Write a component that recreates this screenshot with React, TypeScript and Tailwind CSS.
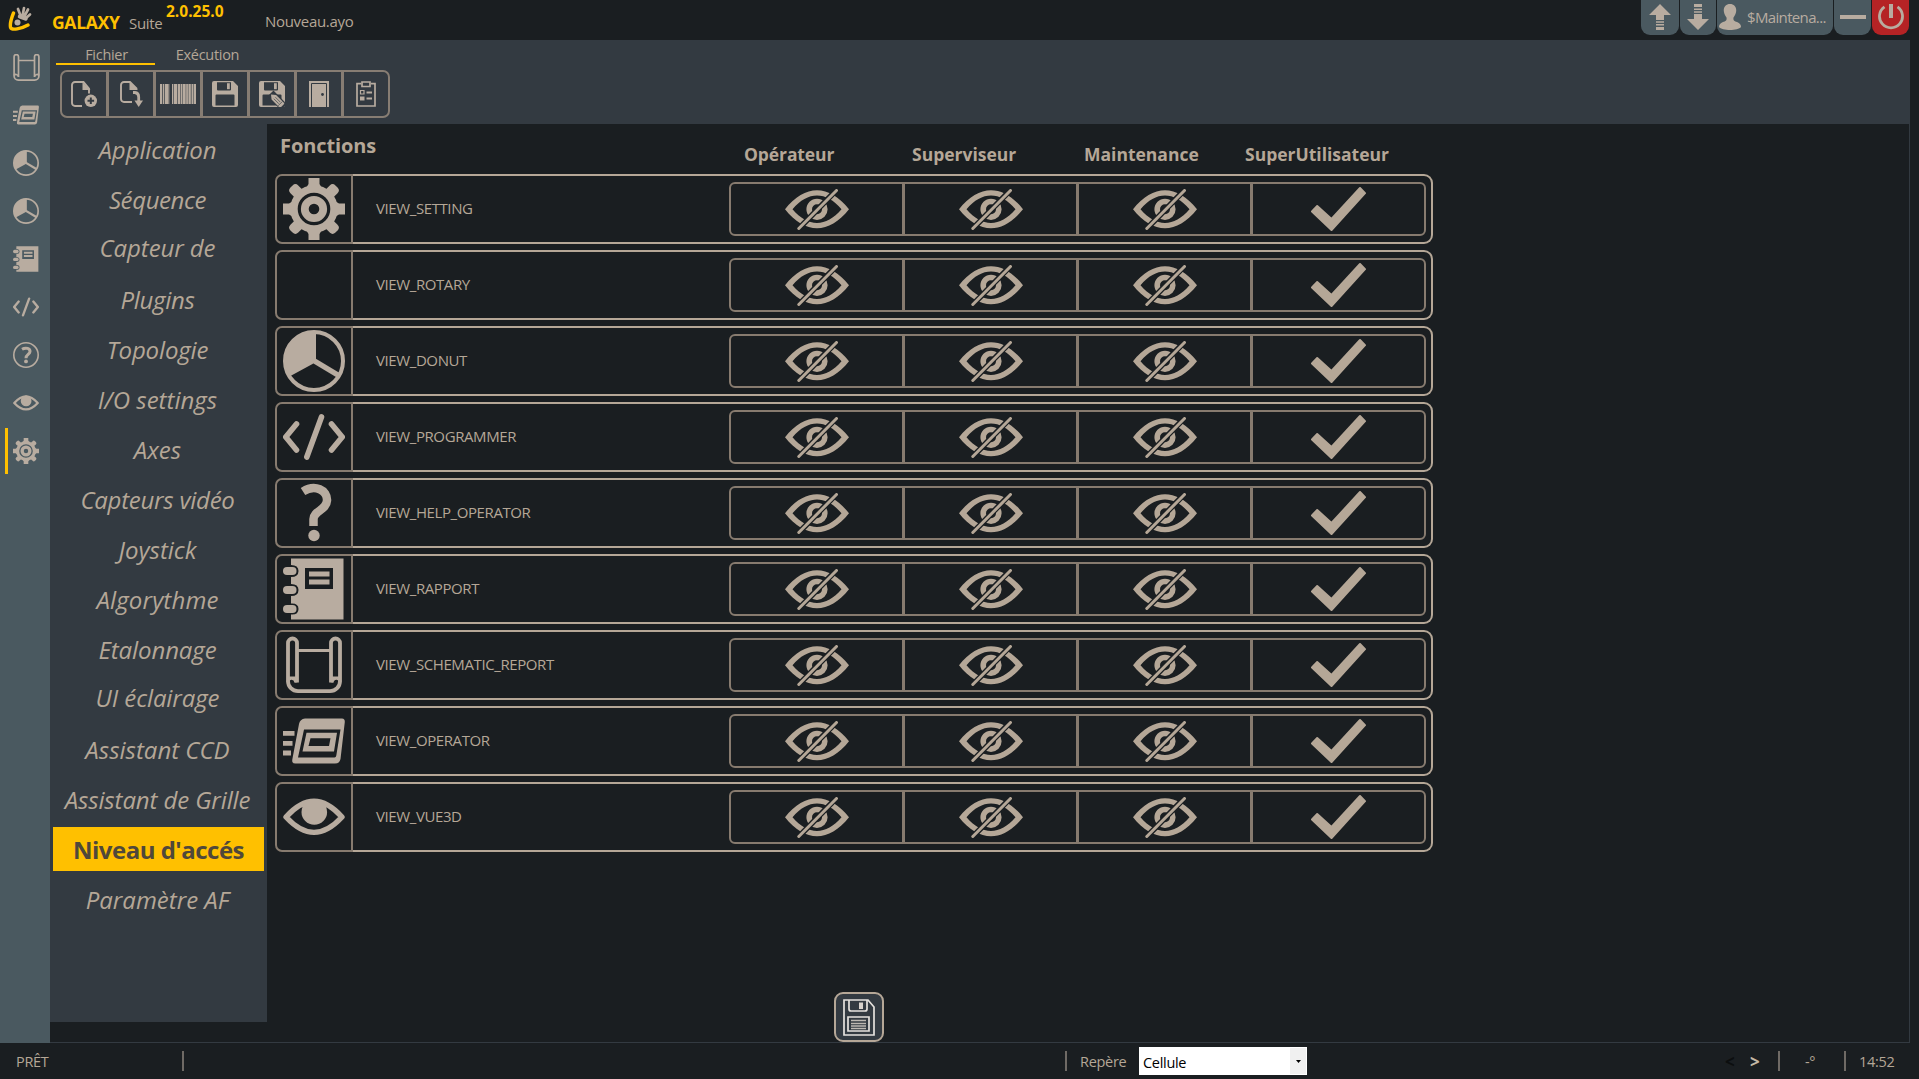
import React from "react";

type IconProps = { className?: string };

const GearIcon = ({ className }: IconProps) => (
  <svg viewBox="0 0 62 62" className={className} fill="currentColor">
    <circle cx="31" cy="31" r="20" fill="none" stroke="currentColor" strokeWidth="7.4" />
    <circle cx="31" cy="31" r="9.2" fill="none" stroke="currentColor" strokeWidth="7.8" />
    {[0, 90, 180, 270].map((a) => (
      <path key={a} d="M25.5 0h11v6l3 5H22.500l3-5z" transform={`rotate(${a} 31 31)`} />
    ))}
    {[45, 135, 225, 315].map((a) => (
      <rect key={a} x="25.5" y="-0.8" width="11" height="13" rx="4" transform={`rotate(${a} 31 31)`} />
    ))}
  </svg>
);

const DonutIcon = ({ className }: IconProps) => (
  <svg viewBox="0 0 62 62" className={className}>
    <circle cx="31" cy="31" r="29" fill="none" stroke="currentColor" strokeWidth="4" />
    <path d="M33 1A30 30 0 0 0 6.5 46.5L29.5 34L33 31z" fill="currentColor" />
    <path d="M29 29.5L56.5 46" stroke="currentColor" strokeWidth="5.5" />
  </svg>
);

const CodeIcon = ({ className }: IconProps) => (
  <svg viewBox="0 0 62 62" className={className} fill="none" stroke="currentColor" strokeWidth="5.6" strokeLinecap="round">
    <path d="M13.5 18L2.8 31L13.5 44M48.5 18L59.2 31L48.5 44M38.5 11L23.8 51" />
  </svg>
);

const QuestionIcon = ({ className }: IconProps) => (
  <svg viewBox="0 0 62 62" className={className}>
    <path d="M20 9.5C32 2 44.500 8 44 18.500C43.500 28 30.500 29 30.500 37V44" fill="none" stroke="currentColor" strokeWidth="8.500" />
    <circle cx="31" cy="53.500" r="5.700" fill="currentColor" />
  </svg>
);

const HelpCircleIcon = ({ className }: IconProps) => (
  <svg viewBox="0 0 26 26" className={className}>
    <circle cx="13" cy="13" r="12.200" fill="none" stroke="currentColor" strokeWidth="1.600" />
    <path d="M9 7.300C13 5 17.300 6.500 17 9.700C16.700 12.500 13 12.600 13 16.200" fill="none" stroke="currentColor" strokeWidth="3" />
    <circle cx="13" cy="19.400" r="1.900" fill="currentColor" />
  </svg>
);

const NotebookIcon = ({ className }: IconProps) => (
  <svg viewBox="0 0 62 62" className={className} fill="currentColor">
    <path
      fillRule="evenodd"
      d="M8 0.5H60.500V61.500H8V56.500Q15.500 57 15.500 51T8 45.500V38Q15.500 38 15.500 32T8 26V19Q15.500 19 15.500 13T8 7zM22 10V31H50V10z"
    />
    <path d="M26 13.500H46.500V18.500H26zM26 21.500H46.500V26.500H26z" />
    {[13, 32, 51].map((y) => (
      <rect key={y} x="0" y={y - 4} width="13.500" height="8" rx="4" />
    ))}
  </svg>
);

const ScrollIcon = ({ className }: IconProps) => (
  <svg viewBox="0 0 62 62" className={className} fill="none" stroke="currentColor" strokeWidth="3.800">
    <path d="M14 48.500V9a4.500 4.500 0 0 0-9 0V47a10 10 0 0 0 10 10.200H47a10 10 0 0 0 10-10.200V9a4.500 4.500 0 0 0-9 0V48.500" />
    <path d="M14 16.500H48M5 44H14M5 48C5 43 12 43 13 48.500M57 44H48M57 48C57 43 50 43 49 48.500" strokeWidth="3" />
  </svg>
);

const SmallScrollIcon = ({ className }: IconProps) => (
  <svg viewBox="0 0 27 27" className={className} fill="none" stroke="currentColor" strokeWidth="1.700">
    <path d="M5.500 23V2.800a2.200 2.200 0 0 0-4.400 0V22a4.200 4.200 0 0 0 4.200 4.100H21.700a4.200 4.200 0 0 0 4.200-4.100V2.800a2.200 2.200 0 0 0-4.400 0V23" />
    <path d="M5.500 6.500H21.500M1.100 21.500C2 20 4.500 20 5.500 22.500M25.900 21.500C25 20 22.500 20 21.500 22.500" />
  </svg>
);

const OperatorIcon = ({ className }: IconProps) => (
  <svg viewBox="0 0 62 62" className={className} fill="currentColor">
    <path
      fillRule="evenodd"
      d="M22 8.500H59Q62 8.500 61.800 12L57.500 49Q56.500 53.500 52 53.500H12.500Q8.500 53.500 9.300 49.500L16 14Q17 9 22 8.500zM21 19.500L15 47.500H51.500Q53 47.500 53.300 45.500L57.500 19.500z"
    />
    <path fillRule="evenodd" d="M23.500 22.700H54L51 41.500H19.500zM27.500 28.300L25.500 36H46L47.500 28.300z" />
    <path d="M0 21H11.500V25.800H0zM0 31H9.500V35.800H0zM0 40.500H8V45.500H0z" />
  </svg>
);

const EyeIcon = ({ className }: IconProps) => (
  <svg viewBox="0 0 62 62" className={className}>
    <path d="M3 31C22 10 40 10 59 31C40 51.500 22 51.500 3 31z" fill="none" stroke="currentColor" strokeWidth="5.400" strokeLinejoin="round" />
    <circle cx="31.300" cy="26" r="12.800" fill="currentColor" />
  </svg>
);

const HiddenIcon = () => (
  <svg viewBox="0 0 64 41" className="h-[41px] w-[64px] text-[#b5a797]">
    <path
      fill="currentColor"
      fillRule="evenodd"
      d="M0 20.300C20 -5 44 -5 64 20.300C44 45.600 20 45.600 0 20.300zM7.500 20.300C23 38.500 41 38.500 56.500 20.300C41 2 23 2 7.500 20.300z"
    />
    <circle cx="32" cy="20.300" r="7.800" fill="none" stroke="currentColor" strokeWidth="5.600" />
    <path d="M54 -1.500L11 42.500" stroke="#1a1e21" strokeWidth="5.600" />
    <path d="M51.500 1.500L13.800 39.500" stroke="currentColor" strokeWidth="3" strokeLinecap="round" />
  </svg>
);

const TickIcon = () => (
  <svg viewBox="0 0 55 44" className="h-[44px] w-[55px] text-[#b5a797]">
    <path d="M1 24.500L6.200 19L20.500 32L49 1L54 6.200L20.500 43z" fill="currentColor" stroke="currentColor" strokeWidth="2" strokeLinejoin="round" />
  </svg>
);

const LogoIcon = () => (
  <svg viewBox="0 0 24 25" className="h-[25px] w-[24px]" fill="none" strokeLinecap="round">
    <g stroke="#b8aca0" strokeWidth="2.700">
      <path d="M12.500 9.500L10 3M14.700 9L16 2M16.500 10L20 3.500M18 12L22 8.500" />
      <path d="M12 10.500L17.500 12.500" strokeWidth="4.500" />
    </g>
    <circle cx="9.500" cy="16.500" r="3" fill="#b8aca0" />
    <path d="M5.500 7C3.500 12 1.800 18.500 2.600 21.500C3.800 24.500 13 23 20 19" stroke="#ffc000" strokeWidth="3.400" />
  </svg>
);

const NewFileIcon = () => (
  <svg viewBox="0 0 26 26" className="h-[26px] w-[26px]">
    <path d="M11 25H4a3 3 0 0 1-3-3V4a3 3 0 0 1 3-3H12.500L18 7.500V12.500" fill="none" stroke="currentColor" strokeWidth="1.900" />
    <path d="M11.500 1V9H19.500z" fill="currentColor" />
    <circle cx="19.800" cy="19.800" r="6.200" fill="currentColor" />
    <path d="M19.800 16.500v6.600M16.500 19.800h6.600" stroke="#333a41" strokeWidth="2" />
  </svg>
);

const ImportFileIcon = () => (
  <svg viewBox="0 0 23 26" className="h-[26px] w-[23px]">
    <path d="M12 21H4a3 3 0 0 1-3-3V4a3 3 0 0 1 3-3H10L17 8" fill="none" stroke="currentColor" strokeWidth="1.900" />
    <path d="M9.500 1V9H18z" fill="currentColor" />
    <path d="M13 11.500H15Q18.700 12 18.700 16V20" fill="none" stroke="currentColor" strokeWidth="2.800" />
    <path d="M14.500 19.500H23L18.700 26z" fill="currentColor" />
  </svg>
);

const BarcodeIcon = () => (
  <svg viewBox="0 0 36 20" className="h-[20px] w-[36px]" fill="currentColor">
    {[
      [0, 2.2], [2.9, 1.4], [5, 3], [8.300, 1], [12, 1.2], [13.800, 3.400], [17.800, 2.400], [20.700, 1.300], [22.500, 3.200], [26.200, 1.700], [28.400, 2.400], [31.500, 1.500], [33.500, 2.500],
    ].map(([x, w]) => (
      <rect key={x} x={x} width={w} height="20" />
    ))}
  </svg>
);

const FloppyIcon = ({ edit = false }: { edit?: boolean }) => (
  <svg viewBox="0 0 26 26" className="h-[26px] w-[26px]">
    <path
      fill="currentColor"
      fillRule="evenodd"
      d="M2 0H21L26 5V24a2 2 0 0 1-2 2H2a2 2 0 0 1-2-2V2a2 2 0 0 1 2-2zM5 1.300V8.500a1 1 0 0 0 1 1H18a1 1 0 0 0 1-1V1.300zM3.500 14.500V24.500H22.500V14.500a1 1 0 0 0-1-1H4.500a1 1 0 0 0-1 1z"
    />
    <path d="M15 2.200h2.800v6H15z" fill="currentColor" />
    {edit && (
      <g transform="translate(12 13.500) rotate(-45)">
        <path d="M-4 -1H4.500V18H-4z" fill="#333a41" />
        <path d="M0 0L3.200 4V15a1 1 0 0 1-1 1H-2.200a1 1 0 0 1-1-1V4z" fill="currentColor" />
        <path d="M-1 5V12M1.200 5V12M-3 13H3" stroke="#333a41" strokeWidth="0.600" />
      </g>
    )}
  </svg>
);

const DoorIcon = () => (
  <svg viewBox="0 0 20 26" className="h-[26px] w-[20px]">
    <path d="M0 0H20V26H0z" fill="currentColor" />
    <path d="M2.500 26V2.500H17.500V26" fill="none" stroke="#333a41" strokeWidth="1" />
    <circle cx="13.500" cy="13.500" r="1.400" fill="#333a41" />
  </svg>
);

const ClipboardIcon = () => (
  <svg viewBox="0 0 20 26" className="h-[26px] w-[20px]" fill="none" stroke="currentColor" strokeWidth="1.700">
    <path d="M5 2.700H1V25H19V2.700H15M6 1H14V5.500H6z" />
    <path d="M4.500 9.500H8V13H4.500z" strokeWidth="1.200" />
    <path d="M10.500 11.500H16M10.500 17.500H16" strokeWidth="1.900" />
    <path d="M4 15.500H8.500V19.500H4z" fill="currentColor" stroke="none" />
  </svg>
);

const SaveIcon = () => (
  <svg viewBox="0 0 32 37" className="h-[37px] w-[32px]" fill="none" stroke="#e6e2de" strokeWidth="1.700">
    <path d="M1 1H25L31 8V36H1z" />
    <path d="M6 1V10a2 2 0 0 0 2 2H22a2 2 0 0 0 2-2V1" />
    <path d="M5 18H26V32H5z" />
    <path d="M16 3.500H20V10H16z" fill="#d8d2cc" stroke="none" />
    <path d="M8 21.500H23M8 24.500H23M8 27H23M8 29.500H23" stroke="#bdb8b2" strokeWidth="1.500" />
  </svg>
);

const UploadArrow = ({ className }: IconProps) => (
  <svg viewBox="0 0 22 26" className={className} fill="currentColor">
    <path d="M11 0L22 11H15V16H7V11H0z" />
    <path d="M7 17.300H15V18.800H7zM7 20H15V21.500H7zM7 23H15V26H7z" />
  </svg>
);

const UserIcon = () => (
  <svg viewBox="0 0 22 26" className="h-[26px] w-[22px]" fill="currentColor">
    <path d="M11 0C15 0 17.500 3 17.200 7C17 10 15.500 12 14.500 13.500C14 16.500 15 17 18 18C21 19 22 21 22 23C19 27 3 27 0 23C0 21 1 19 4 18C7 17 8 16.500 7.500 13.500C6.500 12 5 10 4.800 7C4.500 3 7 0 11 0z" />
  </svg>
);

const PowerIcon = () => (
  <svg viewBox="0 0 26 26" className="h-[26px] w-[26px]" fill="none" stroke="currentColor">
    <path d="M6.500 2.800A11.500 11.500 0 1 0 19.500 2.800" strokeWidth="2.800" />
    <path d="M13 0V14" strokeWidth="4" />
  </svg>
);

const sideIcons = [
  SmallScrollIcon, OperatorIcon, DonutIcon, DonutIcon, NotebookIcon, CodeIcon, HelpCircleIcon, EyeIcon, GearIcon,
];

const menu: { label: string; className: string }[] = [
  { label: "Application", className: "tracking-[-0.1px]" },
  { label: "Séquence", className: "tracking-[-0.4px]" },
  { label: "Capteur de", className: "pb-[4px] tracking-[-0.1px]" },
  { label: "Plugins", className: "tracking-[-0.3px]" },
  { label: "Topologie", className: "tracking-[-0.15px]" },
  { label: "I/O settings", className: "" },
  { label: "Axes", className: "" },
  { label: "Capteurs vidéo", className: "tracking-[-0.25px]" },
  { label: "Joystick", className: "" },
  { label: "Algorythme", className: "tracking-[0.15px]" },
  { label: "Etalonnage", className: "tracking-[-0.1px]" },
  { label: "UI éclairage", className: "pb-[4px] tracking-[-0.1px]" },
  { label: "Assistant CCD", className: "" },
  { label: "Assistant de Grille", className: "tracking-[-0.12px]" },
  { label: "Niveau d'accés", className: "" },
  { label: "Paramètre AF", className: "" },
];

const rows: { label: string; Icon?: React.FC<IconProps> }[] = [
  { label: "VIEW_SETTING", Icon: GearIcon },
  { label: "VIEW_ROTARY" },
  { label: "VIEW_DONUT", Icon: DonutIcon },
  { label: "VIEW_PROGRAMMER", Icon: CodeIcon },
  { label: "VIEW_HELP_OPERATOR", Icon: QuestionIcon },
  { label: "VIEW_RAPPORT", Icon: NotebookIcon },
  { label: "VIEW_SCHEMATIC_REPORT", Icon: ScrollIcon },
  { label: "VIEW_OPERATOR", Icon: OperatorIcon },
  { label: "VIEW_VUE3D", Icon: EyeIcon },
];

const tools = [
  <NewFileIcon />, <ImportFileIcon />, <BarcodeIcon />, <FloppyIcon />, <FloppyIcon edit />, <DoorIcon />, <ClipboardIcon />,
];

function Header() {
  return (
    <header className="flex h-[40px] shrink-0 justify-between pr-[10px]">
      <div className="flex whitespace-nowrap">
        <div className="w-[52px] pl-[8px] pt-[6px]"><LogoIcon /></div>
        <div className="w-[77px] pt-[10px] text-[17.5px] font-bold leading-[24px] tracking-[-0.3px] text-[#ffc000]">GALAXY</div>
        <div className="w-[37px] pt-[11px] text-[15px] leading-[24px] tracking-[-0.3px]">Suite</div>
        <div className="w-[99px] pt-px text-[15.5px] font-bold leading-[21px] text-[#ffc000]">2.0.25.0</div>
        <div className="pt-[10px] text-[15px] leading-[23px] tracking-[-0.3px]">Nouveau.ayo</div>
      </div>
      <div className="flex h-[35px] gap-px text-[#b8aca0]">
        <div className="flex w-[38px] justify-center rounded-b-[9px] bg-[#4a5960] pt-[4px]"><UploadArrow className="h-[26px] w-[22px]" /></div>
        <div className="flex w-[36px] justify-center rounded-b-[9px] bg-[#4a5960] pt-[4px]"><UploadArrow className="h-[26px] w-[22px] rotate-180" /></div>
        <div className="flex w-[116px] rounded-b-[9px] bg-[#4a5960] pl-[2px] pt-[4px]">
          <UserIcon />
          <span className="pl-[6px] text-[15px] leading-[27px] tracking-[-0.65px]">$Maintena...</span>
        </div>
        <div className="flex w-[37px] justify-center rounded-b-[9px] bg-[#4a5960] pt-[15px]"><div className="h-[4px] w-[26px] bg-[#b8aca0]" /></div>
        <div className="flex w-[37px] justify-center rounded-b-[9px] bg-[#b52325] pt-[4px]"><PowerIcon /></div>
      </div>
    </header>
  );
}

function Toolbar() {
  return (
    <div className="h-[84px] shrink-0 bg-[#333a41]">
      <div className="flex h-[30px] items-start pl-[6px] text-center text-[14.5px] leading-[22px] tracking-[-0.3px]">
        <div className="h-[25px] w-[99px] border-b-2 border-[#ffc000] pl-[2px] pt-[4px]">Fichier</div>
        <div className="w-[105px] pt-[4px]">Exécution</div>
      </div>
      <div className="ml-[10px] flex h-[48px] w-[330px] divide-x-[3px] divide-[#877d73] rounded-[7px] border-2 border-[#877d73] text-[#b8aca0]">
        {tools.map((icon, i) => (
          <div key={i} className="flex flex-1 items-center justify-center">{icon}</div>
        ))}
      </div>
    </div>
  );
}

function AccessTable() {
  return (
    <section className="flex flex-1 flex-col pl-[8px]">
      <div className="flex h-[50px] whitespace-nowrap font-bold">
        <h2 className="w-[463px] pl-[5px] pt-[8px] text-[20px] leading-[28px] tracking-[-0.1px]">Fonctions</h2>
        <div className="flex pt-[18px] text-[17.5px] leading-[24px]">
          <span className="w-[168px] pl-[6px] tracking-[-0.1px]">Opérateur</span>
          <span className="w-[172px] pl-[6px]">Superviseur</span>
          <span className="w-[161px] pl-[6px]">Maintenance</span>
          <span className="pl-[6px]">SuperUtilisateur</span>
        </div>
      </div>
      <div className="flex flex-col gap-[6px]">
        {rows.map(({ label, Icon }) => (
          <div key={label} className="flex h-[70px] w-[1158px]">
            <div className="flex w-[78px] items-center justify-center rounded-l-[7px] border-2 border-[#877b6f] text-[#b8aca0]">
              {Icon && <Icon className="h-[62px] w-[62px]" />}
            </div>
            <div className="flex flex-1 items-center rounded-r-[9px] border-y-2 border-r-2 border-[#b5a797] pl-[23px] pr-[5px]">
              <span className="w-[353px] pb-[2px] text-[15px] tracking-[-0.4px]">{label}</span>
              <div className="flex h-[54px] w-[697px] shrink-0 divide-x-[3px] divide-[#877b6f] rounded-[6px] border-2 border-[#877b6f]">
                <div className="flex w-[174px] items-center justify-center"><HiddenIcon /></div>
                <div className="flex w-[174px] items-center justify-center"><HiddenIcon /></div>
                <div className="flex w-[174px] items-center justify-center"><HiddenIcon /></div>
                <div className="flex w-[171px] items-center justify-center"><TickIcon /></div>
              </div>
            </div>
          </div>
        ))}
      </div>
      <button className="ml-[559px] mt-auto flex h-[50px] w-[50px] items-center justify-center rounded-[9px] border-2 border-[#b5a797] bg-[#333a41]">
        <SaveIcon />
      </button>
    </section>
  );
}

function StatusBar() {
  return (
    <footer className="flex h-[36px] shrink-0 items-center whitespace-nowrap text-[14.5px] tracking-[-0.3px]">
      <span className="w-[182px] pl-[16px] pt-px">PRÊT</span>
      <i className="h-[20px] w-[2px] bg-[#6f6a65]" />
      <i className="ml-[881px] h-[20px] w-[2px] bg-[#6f6a65]" />
      <span className="w-[72px] pl-[13px] pt-px">Repère</span>
      <div className="flex h-[28px] w-[168px] items-center bg-white p-px text-black">
        <span className="flex-1 pl-[3px] pt-[3px]">Cellule</span>
        <span className="flex h-full w-[16px] items-center justify-center bg-[#f0f0f0]">
          <svg viewBox="0 0 5 3" className="h-[3px] w-[5px]"><path d="M0 0H5L2.500 3z" /></svg>
        </span>
      </div>
      <span className="ml-[418px] w-[25px] pt-[2px] text-[17px] font-bold text-[#0c0e0f]">&lt;</span>
      <span className="w-[28px] pt-[2px] text-[17px] font-bold text-[#c4b8a5]">&gt;</span>
      <i className="h-[20px] w-[2px] bg-[#6f6a65]" />
      <span className="w-[64px] pl-[25px] pt-px">-°</span>
      <i className="h-[20px] w-[2px] bg-[#6f6a65]" />
      <span className="pl-[13px] pt-px">14:52</span>
    </footer>
  );
}

export default function App() {
  return (
    <div className="flex h-[1079px] w-[1919px] flex-col overflow-hidden bg-[#1a1e21] font-['Open_Sans','Noto_Sans',sans-serif] text-[#b5a797]">
      <Header />
      <div className="flex h-[1003px] shrink-0">
        <nav className="flex w-[50px] shrink-0 flex-col bg-[#4a5960] pt-[3px] text-[#b8aca0]">
          {sideIcons.map((Icon, i) => (
            <div key={i} className="flex h-[48px] items-center">
              <div className={i === 8 ? "h-[46px] w-[8px] border-r-[3px] border-[#ffc000]" : "w-[8px]"} />
              <Icon className={i === 0 ? "ml-[5px] mt-px h-[27px] w-[27px]" : "ml-[5px] h-[26px] w-[26px]"} />
            </div>
          ))}
        </nav>
        <div className="flex w-[1860px] flex-col border-b border-r border-[#333a41]">
          <Toolbar />
          <div className="flex min-h-0 flex-1">
            <aside className="flex h-[898px] w-[217px] flex-col gap-[6px] bg-[#333a41] px-[3px] pt-[3px]">
              {menu.map(({ label, className }) =>
                label === "Niveau d'accés" ? (
                  <div key={label} className="flex h-[44px] items-center justify-center whitespace-nowrap bg-[#ffc000] pt-px text-[24px] font-bold tracking-[-0.5px] text-[#50483a]">{label}</div>
                ) : (
                  <div key={label} className="h-[44px] pr-[2px] pt-[2px] text-[24px] italic">
                    <div className={`flex h-full items-center justify-center whitespace-nowrap ${className}`}>{label}</div>
                  </div>
                ),
              )}
            </aside>
            <AccessTable />
          </div>
        </div>
      </div>
      <StatusBar />
    </div>
  );
}
